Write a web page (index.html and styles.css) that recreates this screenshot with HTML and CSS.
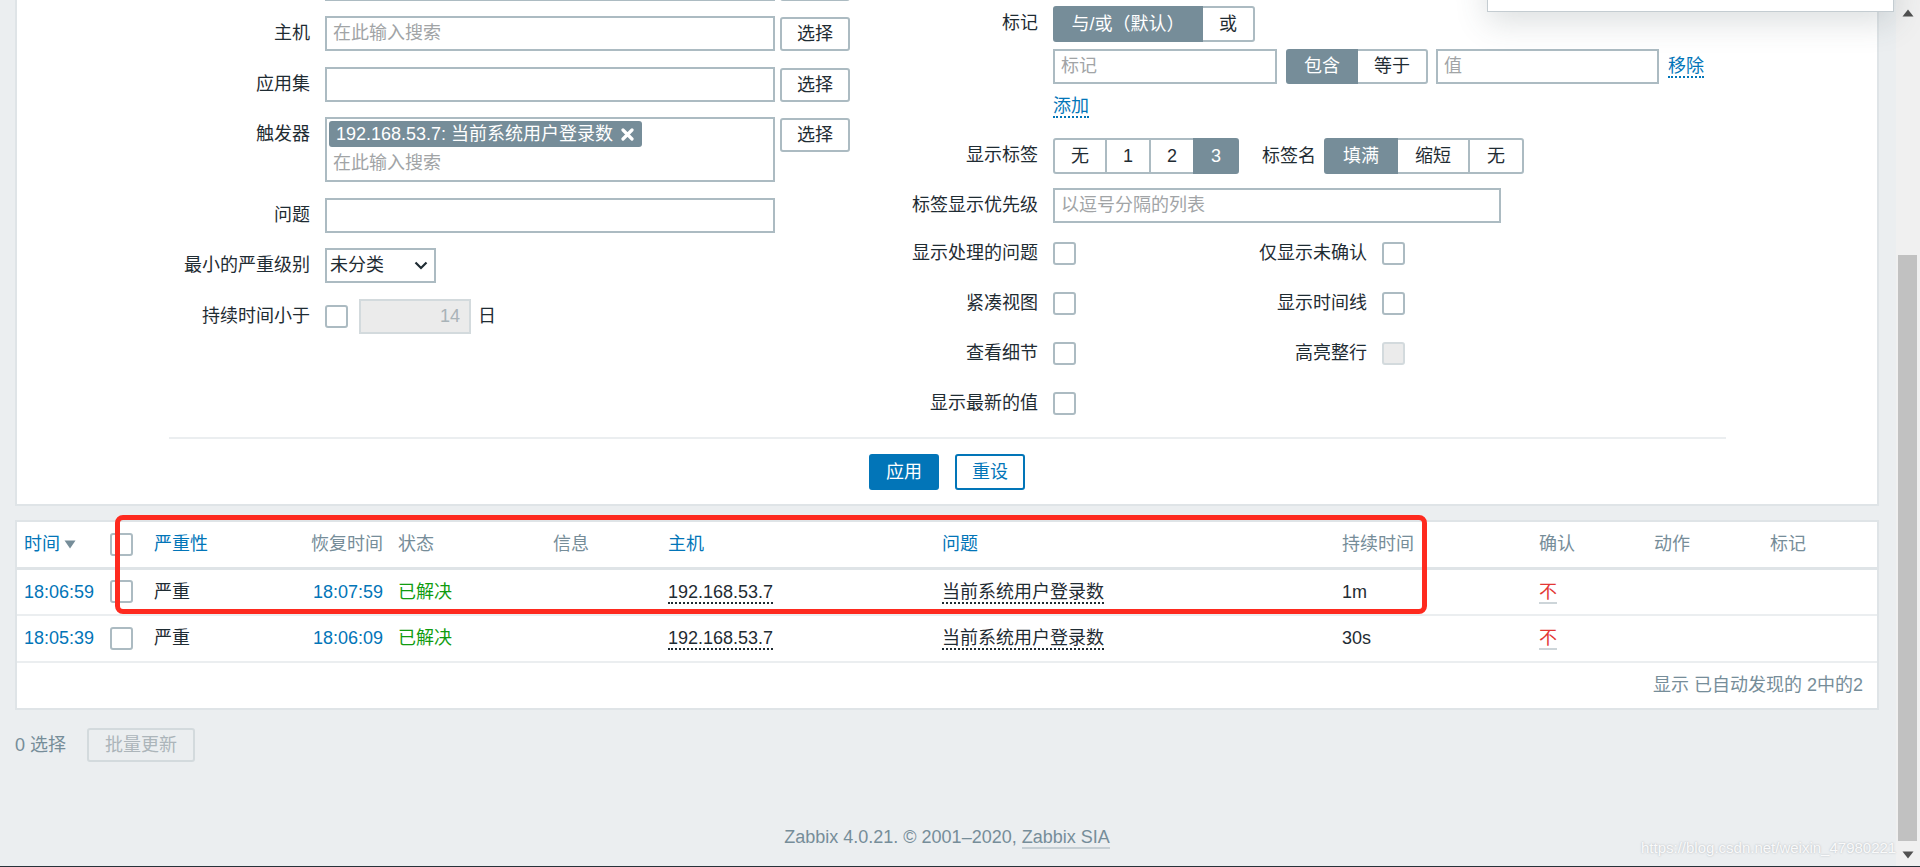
FILE: index.html
```html
<!DOCTYPE html>
<html lang="zh-CN">
<head>
<meta charset="utf-8">
<title>问题 - Zabbix</title>
<link rel="stylesheet" href="styles.css">
</head>
<body>
<div class="viewport">
  <div class="main">
    <div class="popup"></div>

    <form class="panel filter">
      <div class="filter-cols">
        <div class="col col-left">
          <div class="row">
            <div class="lbl"></div>
            <input class="input w450" type="text">
            <button type="button" class="btn btn-ghost"></button>
          </div>
          <div class="row">
            <div class="lbl">主机</div>
            <input class="input w450" type="text" placeholder="在此输入搜索">
            <button type="button" class="btn">选择</button>
          </div>
          <div class="row">
            <div class="lbl">应用集</div>
            <input class="input w450" type="text">
            <button type="button" class="btn">选择</button>
          </div>
          <div class="row">
            <div class="lbl">触发器</div>
            <div class="ms">
              <span class="chip">192.168.53.7: 当前系统用户登录数
                <svg class="chip-x" width="13" height="13" viewBox="0 0 13 13"><path d="M2 2L11 11M11 2L2 11" stroke="#fff" stroke-width="3.2" stroke-linecap="round"/></svg>
              </span>
              <input class="ms-input" type="text" placeholder="在此输入搜索">
            </div>
            <button type="button" class="btn">选择</button>
          </div>
          <div class="row">
            <div class="lbl">问题</div>
            <input class="input w450" type="text">
          </div>
          <div class="row">
            <div class="lbl">最小的严重级别</div>
            <div class="select"><span>未分类</span>
              <svg width="14" height="9" viewBox="0 0 14 9"><path d="M1.5 1.5L7 7L12.5 1.5" fill="none" stroke="#1f2c33" stroke-width="2.2"/></svg>
            </div>
          </div>
          <div class="row">
            <div class="lbl">持续时间小于</div>
            <div class="inline">
              <input class="cb" type="checkbox">
              <input class="input num" type="text" value="14" disabled>
              <span class="unit">日</span>
            </div>
          </div>
        </div>

        <div class="col col-right">
          <div class="row">
            <div class="lbl lbl-r">标记</div>
            <div class="tags">
              <div class="seg">
                <span class="on wide">与/或（默认）</span><span>或</span>
              </div>
              <div class="tag-row">
                <input class="input w224" type="text" placeholder="标记">
                <div class="seg">
                  <span class="on">包含</span><span>等于</span>
                </div>
                <input class="input w223" type="text" placeholder="值">
                <a class="link">移除</a>
              </div>
              <div class="add-row"><a class="link">添加</a></div>
            </div>
          </div>
          <div class="row r-tagshow">
            <div class="lbl lbl-r">显示标签</div>
            <div class="seg">
              <span>无</span><span>1</span><span>2</span><span class="on">3</span>
            </div>
            <span class="sublbl">标签名</span>
            <div class="seg seg-b">
              <span class="on">填满</span><span>缩短</span><span>无</span>
            </div>
          </div>
          <div class="row r-prio">
            <div class="lbl lbl-r">标签显示优先级</div>
            <input class="input w448" type="text" placeholder="以逗号分隔的列表">
          </div>
          <div class="row r-cb r-cb1">
            <div class="lbl lbl-r">显示处理的问题</div>
            <div class="cbcell"><input class="cb" type="checkbox"></div>
            <div class="lbl2">仅显示未确认</div>
            <input class="cb" type="checkbox">
          </div>
          <div class="row r-cb">
            <div class="lbl lbl-r">紧凑视图</div>
            <div class="cbcell"><input class="cb" type="checkbox"></div>
            <div class="lbl2">显示时间线</div>
            <input class="cb" type="checkbox">
          </div>
          <div class="row r-cb">
            <div class="lbl lbl-r">查看细节</div>
            <div class="cbcell"><input class="cb" type="checkbox"></div>
            <div class="lbl2">高亮整行</div>
            <input class="cb" type="checkbox" disabled>
          </div>
          <div class="row r-cb">
            <div class="lbl lbl-r">显示最新的值</div>
            <div class="cbcell"><input class="cb" type="checkbox"></div>
          </div>
        </div>
      </div>
      <div class="sep"></div>
      <div class="actions">
        <button type="button" class="btn btn-apply">应用</button>
        <button type="button" class="btn btn-reset">重设</button>
      </div>
    </form>

    <div class="panel list">
      <table class="grid">
        <colgroup>
          <col class="c1"><col class="c2"><col class="c3"><col class="c4"><col class="c5"><col class="c6">
          <col class="c7"><col class="c8"><col class="c9"><col class="c10"><col class="c11"><col class="c12">
        </colgroup>
        <thead>
          <tr>
            <th><a class="hlink">时间</a><svg class="sort" width="12" height="9" viewBox="0 0 12 9"><path d="M0.5 0.5H11.5L6 8.5Z" fill="#768d99"/></svg></th>
            <th><input class="cb" type="checkbox"></th>
            <th><a class="hlink">严重性</a></th>
            <th class="right">恢复时间</th>
            <th>状态</th>
            <th>信息</th>
            <th><a class="hlink">主机</a></th>
            <th><a class="hlink">问题</a></th>
            <th>持续时间</th>
            <th>确认</th>
            <th>动作</th>
            <th>标记</th>
          </tr>
        </thead>
        <tbody>
          <tr>
            <td><a class="tlink">18:06:59</a></td>
            <td><input class="cb" type="checkbox"></td>
            <td>严重</td>
            <td class="right"><a class="tlink">18:07:59</a></td>
            <td class="ok">已解决</td>
            <td></td>
            <td><a class="dlink">192.168.53.7</a></td>
            <td><a class="dlink">当前系统用户登录数</a></td>
            <td>1m</td>
            <td><a class="nolink">不</a></td>
            <td></td>
            <td></td>
          </tr>
          <tr>
            <td><a class="tlink">18:05:39</a></td>
            <td><input class="cb" type="checkbox"></td>
            <td>严重</td>
            <td class="right"><a class="tlink">18:06:09</a></td>
            <td class="ok">已解决</td>
            <td></td>
            <td><a class="dlink">192.168.53.7</a></td>
            <td><a class="dlink">当前系统用户登录数</a></td>
            <td>30s</td>
            <td><a class="nolink">不</a></td>
            <td></td>
            <td></td>
          </tr>
        </tbody>
      </table>
      <div class="list-foot">显示 已自动发现的 2中的2</div>
      <div class="annot"></div>
    </div>

    <div class="mass">
      <span class="sel-count">0 选择</span>
      <button type="button" class="btn btn-dis" disabled>批量更新</button>
    </div>

    <div class="footer">Zabbix 4.0.21. © 2001–2020, <a class="flink">Zabbix SIA</a></div>
  </div>

  <div class="scrollbar">
    <div class="sb-btn sb-up"><svg width="12" height="8" viewBox="0 0 12 8"><path d="M6 0.5L11.5 7.5H0.5Z" fill="#505050"/></svg></div>
    <div class="sb-gap"></div>
    <div class="sb-thumb"></div>
    <div class="sb-rest"></div>
    <div class="sb-btn sb-down"><svg width="12" height="8" viewBox="0 0 12 8"><path d="M0.5 0.5H11.5L6 7.5Z" fill="#505050"/></svg></div>
  </div>

  <div class="watermark">https://blog.csdn.net/weixin_47980221</div>
</div>
<div class="bottom-line"></div>
</body>
</html>
```

FILE: styles.css
```css
* { box-sizing: border-box; }

html, body {
  margin: 0;
  padding: 0;
}

body {
  font-family: "Liberation Sans", "Noto Sans CJK SC", sans-serif;
  font-size: 18px;
  line-height: 1.25;
  color: #1f2c33;
  background: #ebeef0;
  overflow: hidden;
  width: 1920px;
  height: 867px;
}

.viewport {
  display: flex;
  height: 866px;
  position: relative;
  overflow: hidden;
}

.bottom-line {
  height: 1px;
  background: #27323a;
}

.main {
  width: 1896px;
  flex: none;
  padding: 0 17px 0 15px;
  display: flex;
  flex-direction: column;
  position: relative;
}

/* popup overlay at top right */
.popup {
  position: absolute;
  left: 1487px;
  top: -100px;
  width: 407px;
  height: 112px;
  background: #fff;
  border: 1px solid #c4ccd1;
  box-shadow: 0 10px 30px rgba(60, 75, 85, 0.18);
  z-index: 5;
}

/* panels */
.panel {
  background: #fff;
  border: 2px solid #dfe4e7;
}

.filter {
  margin: -60px 0 0;
  border-top: 0;
  padding-bottom: 14px;
  display: flex;
  flex-direction: column;
}

.filter-cols {
  display: flex;
}

.col {
  display: flex;
  flex-direction: column;
}

.col-left {
  width: 863px;
  padding-top: 25.5px;
  gap: 15.5px;
}

.col-right {
  flex: 1;
  padding-top: 66px;
}

.row {
  display: flex;
  align-items: flex-start;
}

.lbl {
  width: 293px;
  margin-right: 15px;
  text-align: right;
  line-height: 35px;
  min-height: 35px;
  white-space: nowrap;
  flex: none;
}

.lbl-r {
  width: 158px;
}

/* inputs */
.input {
  height: 35px;
  border: 2px solid #acbbc2;
  background: #fff;
  font: inherit;
  color: #1f2c33;
  padding: 0 6px;
  outline: none;
  border-radius: 0;
  margin: 0;
}

.input::placeholder,
.ms-input::placeholder {
  color: #a1a4a6;
  opacity: 1;
}

.w450 { width: 450px; }
.w224 { width: 224px; }
.w223 { width: 223px; }
.w448 { width: 448px; }

.btn {
  height: 34px;
  margin: 0 0 0 5px;
  padding: 0 15px;
  border: 2px solid #acbbc2;
  border-radius: 3px;
  background: #fff;
  font: inherit;
  color: #1f2c33;
  line-height: 30px;
}

.btn-ghost {
  width: 70px;
}

.row .btn {
  margin-top: 1px;
}

/* multiselect */
.ms {
  width: 450px;
  height: 65px;
  border: 2px solid #acbbc2;
  padding: 2px;
  display: flex;
  flex-direction: column;
  align-items: flex-start;
}

.chip {
  height: 27px;
  background: #768d99;
  color: #fff;
  border-radius: 3px;
  padding: 0 8px 0 7px;
  display: inline-flex;
  align-items: center;
  gap: 8px;
  white-space: nowrap;
}

.chip-x {
  display: block;
}

.ms-input {
  border: 0;
  outline: none;
  font: inherit;
  color: #1f2c33;
  height: 30px;
  margin-top: 2px;
  padding: 0 4px;
  width: 100%;
  background: transparent;
}

.select {
  width: 111px;
  height: 35px;
  border: 2px solid #acbbc2;
  display: flex;
  align-items: center;
  justify-content: space-between;
  padding: 0 6px 0 3px;
}

.inline {
  display: flex;
  align-items: center;
  height: 35px;
}

.cb {
  appearance: none;
  -webkit-appearance: none;
  width: 23px;
  height: 23px;
  margin: 0;
  border: 2px solid #acbbc2;
  border-radius: 3px;
  background: #fff;
  display: block;
  flex: none;
}

.cb:disabled {
  background: #ebebeb;
  border-color: #d3dadd;
}

.num {
  width: 112px;
  margin-left: 11px;
  background: #ebebeb;
  border-color: #d3dadd;
  text-align: right;
  color: #a9b3b8;
  padding-right: 9px;
}

.unit {
  margin-left: 7px;
}

/* right column */
.tags {
  display: flex;
  flex-direction: column;
  align-items: flex-start;
}

.seg {
  display: flex;
  height: 36px;
  flex: none;
}

.seg span {
  border: 2px solid #acbbc2;
  margin-left: -2px;
  padding: 0 16px;
  line-height: 32px;
  background: #fff;
  white-space: nowrap;
}

.seg span.wide {
  padding: 0 16.5px;
}

.seg-b span {
  padding: 0 17px;
}

.seg span:first-child {
  margin-left: 0;
  border-radius: 3px 0 0 3px;
}

.seg span:last-child {
  border-radius: 0 3px 3px 0;
}

.seg span.on {
  background: #768d99;
  border-color: #768d99;
  color: #fff;
  position: relative;
}

.tag-row {
  display: flex;
  align-items: center;
  margin-top: 7px;
}

.tag-row .seg {
  height: 35px;
  margin-left: 9px;
}

.tag-row .seg span {
  line-height: 31px;
}

.tag-row .w223 {
  margin-left: 8px;
}

.link {
  color: #0275b8;
  border-bottom: 2px dotted #0275b8;
  line-height: 20px;
  cursor: pointer;
}

.tag-row .link {
  margin-left: 9px;
}

.add-row {
  margin-top: 11px;
  height: 22px;
}

.r-tagshow {
  margin-top: 21px;
}

.sublbl {
  line-height: 36px;
  margin-left: 23px;
  margin-right: 8px;
}

.r-prio {
  margin-top: 14px;
}

.r-cb {
  height: 35px;
  align-items: center;
  margin-top: 15px;
}

.r-cb1 {
  margin-top: 12.5px;
}

.cbcell {
  width: 147px;
  flex: none;
}

.lbl2 {
  width: 167px;
  text-align: right;
  margin-right: 15px;
  white-space: nowrap;
}

.sep {
  height: 2px;
  background: #ebeef0;
  margin: 16.5px 151px 0 152px;
}

.actions {
  display: flex;
  justify-content: center;
  gap: 16px;
  margin-top: 15px;
}

.actions .btn {
  height: 36px;
  margin: 0;
  line-height: 32px;
}

.btn-apply {
  background: #0275b8;
  border-color: #0275b8;
  color: #fff;
}

.btn-reset {
  color: #0275b8;
  border-color: #0275b8;
}

/* list */
.list {
  margin-top: 14px;
  position: relative;
}

.grid {
  border-collapse: collapse;
  table-layout: fixed;
  width: 1860px;
}

.c1 { width: 86px; }
.c2 { width: 44px; }
.c3 { width: 157px; }
.c4 { width: 87px; }
.c5 { width: 155px; }
.c6 { width: 115px; }
.c7 { width: 274px; }
.c8 { width: 400px; }
.c9 { width: 197px; }
.c10 { width: 115px; }
.c11 { width: 116px; }
.c12 { width: 114px; }

.grid th,
.grid td {
  padding: 0 7px;
  text-align: left;
  font-weight: normal;
  white-space: nowrap;
  vertical-align: middle;
}

.grid th {
  height: 46px;
  color: #768d99;
  border-bottom: 3px solid #dfe4e7;
}

.grid td {
  height: 47px;
  border-bottom: 2px solid #ebeef0;
}

.grid .right {
  text-align: right;
  padding-right: 8px;
}

.hlink {
  color: #0275b8;
}

.sort {
  margin-left: 4px;
  vertical-align: 1px;
}

.tlink {
  color: #0275b8;
}

.ok {
  color: #109c10;
}

.dlink {
  border-bottom: 2px dotted #1f2c33;
}

.nolink {
  color: #e33734;
  border-bottom: 2px solid #cdd5d9;
}

.list-foot {
  height: 45px;
  line-height: 45px;
  text-align: right;
  color: #768d99;
  padding-right: 14px;
}

.annot {
  position: absolute;
  left: 98px;
  top: -7px;
  width: 1312px;
  height: 99px;
  border: 5px solid #fe2a1f;
  border-radius: 8px;
  pointer-events: none;
}

.mass {
  display: flex;
  align-items: center;
  margin-top: 18px;
}

.sel-count {
  color: #768d99;
}

.btn-dis {
  margin-left: 21px;
  width: 108px;
  padding: 0;
  background: #ebeef0;
  border-color: #d3dadd;
  color: #acb5ba;
}

.footer {
  margin-top: 64px;
  text-align: center;
  color: #768d99;
  line-height: 22px;
}

.flink {
  color: #768d99;
  border-bottom: 2px solid #c5ced3;
}

/* scrollbar */
.scrollbar {
  width: 24px;
  flex: none;
  background: #f0f0f0;
  display: flex;
  flex-direction: column;
}

.sb-btn {
  display: flex;
  align-items: center;
  justify-content: center;
  flex: none;
}

.sb-up { height: 26px; }
.sb-gap { height: 229px; }
.sb-thumb {
  height: 586px;
  background: #c1c1c1;
  margin: 0 3px 0 2px;
}
.sb-rest { flex: 1; }
.sb-down { height: 22px; }

.watermark {
  position: absolute;
  left: 1641px;
  top: 838px;
  font-size: 15px;
  line-height: 20px;
  color: rgba(255, 255, 255, 0.92);
  text-shadow: 0 0 2px rgba(60, 70, 80, 0.35);
  white-space: nowrap;
}
```
